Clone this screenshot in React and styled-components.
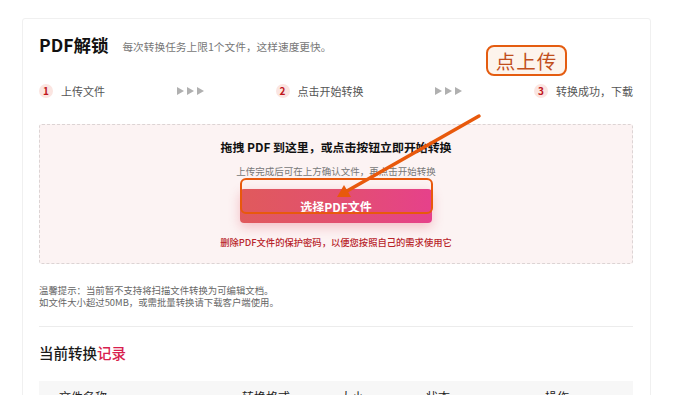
import styled, { createGlobalStyle } from "styled-components";

const Global = createGlobalStyle`
  html, body {
    margin: 0;
    padding: 0;
    background: #fff;
    font-family: "Noto Sans CJK SC", "Noto Sans", sans-serif;
    color: #333;
    overflow: hidden;
  }
`

const Page = styled.div`
  position: relative;
  width: 700px;
  height: 395px;
  padding-top: 18px;
  box-sizing: border-box;
`

const Card = styled.div`
  margin-left: 22px;
  width: 629px;
  box-sizing: border-box;
  border: 1px solid #f0f0f0;
  border-radius: 3px;
  padding: 14px 17px 40px 16px;
  background: #fff;
`

const Head = styled.div`
  display: flex;
  align-items: center;
  height: 24px;
  gap: 14px;
`

const Title = styled.h1`
  margin: 0;
  font-size: 17.5px;
  font-weight: 700;
  color: #111;
  line-height: 24px;
`

const Sub = styled.span`
  font-size: 10.7px;
  color: #777;
  padding-top: 2px;
`

const Steps = styled.div`
  margin-top: 24px;
  height: 20px;
  display: flex;
  align-items: center;
  justify-content: space-between;
`

const Step = styled.div`
  display: flex;
  align-items: center;
  gap: 8px;
  font-size: 11px;
  color: #555;
`

const Num = styled.span`
  width: 14px;
  height: 14px;
  border-radius: 50%;
  background: #fbe5e1;
  color: #c0161c;
  font-size: 10px;
  font-weight: 700;
  display: flex;
  align-items: center;
  justify-content: center;
  line-height: 1;
`

const Arrows = styled.div`
  display: flex;
  gap: 3px;
`

const Tri = styled.span`
  width: 0;
  height: 0;
  border-left: 7px solid #b0b0b0;
  border-top: 4px solid transparent;
  border-bottom: 4px solid transparent;
`

const Drop = styled.div`
  margin-top: 23px;
  height: 140px;
  box-sizing: border-box;
  border: 1px dashed #dcd4d4;
  border-radius: 3px;
  background: #fcf3f3;
  display: flex;
  flex-direction: column;
  align-items: center;
  padding-top: 13px;
`

const DropTitle = styled.div`
  font-size: 11.9px;
  font-weight: 700;
  color: #111;
  line-height: 18px;
`

const DropSub = styled.div`
  margin-top: 8px;
  font-size: 9.5px;
  color: #777;
  line-height: 14px;
`

const BtnWrap = styled.div`
  position: relative;
  margin-top: 11px;
`

const Button = styled.button`
  width: 192px;
  height: 34px;
  border: none;
  border-radius: 4px;
  background: linear-gradient(90deg, #e05a5c 0%, #e2506f 50%, #e6418b 100%);
  box-shadow: 0 4px 12px rgba(226, 80, 100, 0.32);
  color: #fff;
  font-family: inherit;
  font-size: 12px;
  font-weight: 700;
  padding-top: 2px;
`

const Frame = styled.div`
  position: absolute;
  left: 0;
  right: -1px;
  top: -11px;
  bottom: 9px;
  border: 2px solid #e8590c;
  border-radius: 6px;
  pointer-events: none;
`

const Warn = styled.div`
  margin-top: 12px;
  font-size: 9.3px;
  font-weight: 500;
  color: #b8242a;
  line-height: 14px;
`

const Tips = styled.div`
  margin-top: 20px;
  font-size: 9.4px;
  line-height: 12px;
  color: #666;
`

const Line = styled.div`
  height: 12px;
`

const Divider = styled.hr`
  margin: 18px 0 0;
  border: none;
  border-top: 1px solid #ececec;
`

const Records = styled.h2`
  margin: 15px 0 0;
  font-size: 14.5px;
  font-weight: 500;
  line-height: 22px;
  color: #1a1a1a;
`

const Accent = styled.span`
  color: #d81e4e;
`

const TableHead = styled.div`
  margin-top: 17px;
  height: 36px;
  box-sizing: border-box;
  padding-bottom: 6px;
  background: #f7f7f7;
  display: grid;
  grid-template-columns: 183px 98px 86px 119px 1fr;
  align-items: center;
  padding-left: 20px;
  font-size: 12px;
  color: #222;
`

const Label = styled.div`
  position: absolute;
  left: 486px;
  top: 45px;
  width: 81px;
  height: 31px;
  box-sizing: border-box;
  border: 2px solid #e45c10;
  border-radius: 8px;
  background: #fdf4ec;
  color: #c14e1c;
  font-size: 19.5px;
  display: flex;
  align-items: center;
  justify-content: center;
  letter-spacing: 1px;
`

const Pointer = styled.svg`
  position: absolute;
  left: 0;
  top: 0;
  pointer-events: none;
`

const steps = ["上传文件", "点击开始转换", "转换成功，下载"];

export default function App() {
  return (
    <Page>
      <Global />
      <Card>
        <Head>
          <Title>PDF解锁</Title>
          <Sub>每次转换任务上限1个文件，这样速度更快。</Sub>
        </Head>
        <Steps>
          {steps.map((s, i) => (
            <>
              <Step key={s}>
                <Num>{i + 1}</Num>
                {s}
              </Step>
              {i < steps.length - 1 && (
                <Arrows key={"a" + i}>
                  <Tri />
                  <Tri />
                  <Tri />
                </Arrows>
              )}
            </>
          ))}
        </Steps>
        <Drop>
          <DropTitle>拖拽 PDF 到这里，或点击按钮立即开始转换</DropTitle>
          <DropSub>上传完成后可在上方确认文件，再点击开始转换</DropSub>
          <BtnWrap>
            <Button>选择PDF文件</Button>
            <Frame />
          </BtnWrap>
          <Warn>删除PDF文件的保护密码，以便您按照自己的需求使用它</Warn>
        </Drop>
        <Tips>
          <Line>温馨提示：当前暂不支持将扫描文件转换为可编辑文档。</Line>
          <Line>如文件大小超过50MB，或需批量转换请下载客户端使用。</Line>
        </Tips>
        <Divider />
        <Records>
          当前转换<Accent>记录</Accent>
        </Records>
        <TableHead>
          <span>文件名称</span>
          <span>转换格式</span>
          <span>大小</span>
          <span>状态</span>
          <span>操作</span>
        </TableHead>
      </Card>
      <Label>点上传</Label>
      <Pointer width="700" height="395">
        <line x1="479" y1="116" x2="347" y2="191" stroke="#e8590c" strokeWidth="3.5" strokeLinecap="round" />
        <polygon points="337,197 351,197 344,185" fill="#e8590c" />
      </Pointer>
    </Page>
  );
}
